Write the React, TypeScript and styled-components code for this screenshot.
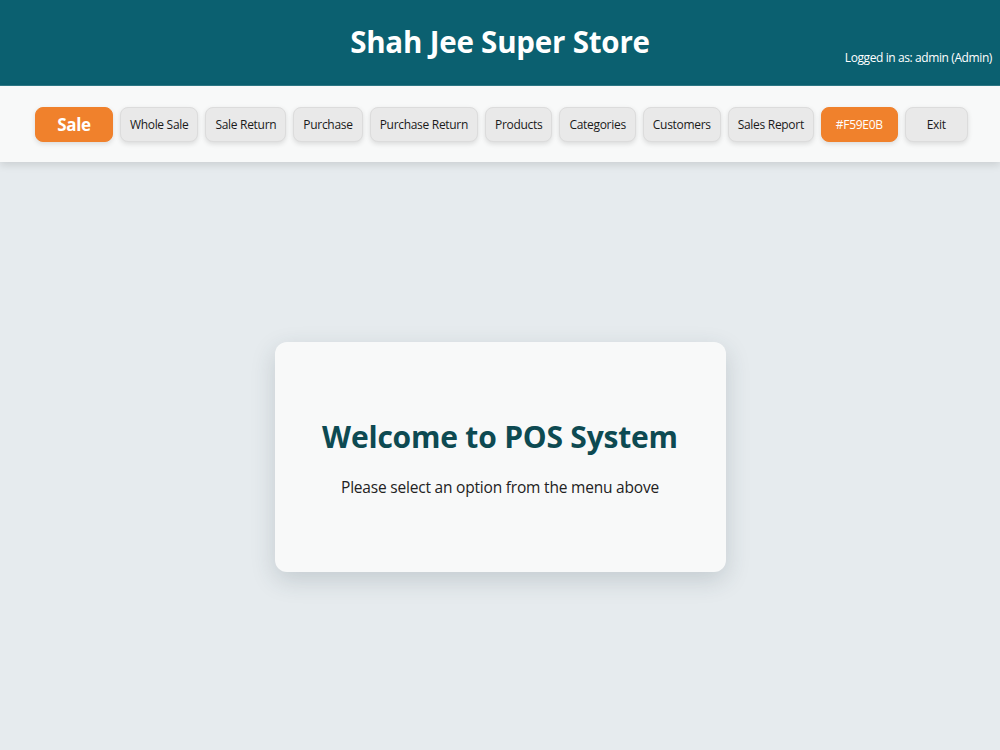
import { memo } from "react";
import styled, { createGlobalStyle } from "styled-components";

const GlobalStyle = createGlobalStyle`
  html, body {
    margin: 0;
    padding: 0;
    height: 100%;
  }
  body {
    background: #e6ebee;
    font-family: "Open Sans", "Noto Sans", "Liberation Sans", sans-serif;
    color: #222;
  }
  #root {
    min-height: 100vh;
    display: flex;
    flex-direction: column;
  }
`;

const menuItems = [
  "Whole Sale",
  "Sale Return",
  "Purchase",
  "Purchase Return",
  "Products",
  "Categories",
  "Customers",
  "Sales Report",
];

const App = memo(() => {
  return (
    <>
      <GlobalStyle />
      <SHeader>
        <span />
        <STitle>Shah Jee Super Store</STitle>
        <SUser>Logged in as: admin (Admin)</SUser>
      </SHeader>
      <SNav>
        <SNavButton variant="main">Sale</SNavButton>
        {menuItems.map((item) => (
          <SNavButton key={item}>{item}</SNavButton>
        ))}
        <SNavButton variant="accent">#F59E0B</SNavButton>
        <SNavButton wide>Exit</SNavButton>
      </SNav>
      <SMain>
        <SCard>
          <SWelcome>Welcome to POS System</SWelcome>
          <SHint>Please select an option from the menu above</SHint>
        </SCard>
      </SMain>
    </>
  );
});

export default App;

const SHeader = styled.header`
  height: 86px;
  box-sizing: border-box;
  background: #0b6070;
  display: grid;
  grid-template-columns: 1fr auto 1fr;
  align-items: center;
  padding: 0 8px;
  border-bottom: 1px solid #2f7a88;
`;

const STitle = styled.h1`
  margin: 0 0 2px;
  color: #fff;
  font-size: 29.5px;
  font-weight: 700;
  letter-spacing: -0.2px;
`;

const SUser = styled.div`
  justify-self: end;
  align-self: end;
  margin-bottom: 19px;
  color: #fff;
  font-size: 12px;
  letter-spacing: -0.4px;
`;

const SNav = styled.nav`
  background: #f8f9f9;
  height: 76px;
  box-sizing: border-box;
  display: flex;
  align-items: center;
  justify-content: center;
  gap: 7px;
  padding-top: 1px;
  padding-left: 3px;
  box-shadow: 0 3px 8px rgba(0, 0, 0, 0.12);
  position: relative;
  z-index: 1;
`;

const SNavButton = styled.button<{ variant?: "main" | "accent"; wide?: boolean }>`
  height: 35px;
  box-sizing: border-box;
  padding: 0 ${(p) => (p.variant === "main" ? "21px" : p.variant === "accent" ? "14px" : p.wide ? "21px" : "9px")};
  border-radius: 8px;
  font-family: inherit;
  font-size: ${(p) => (p.variant === "main" ? "17px" : "12px")};
  font-weight: ${(p) => (p.variant === "main" ? 700 : 500)};
  letter-spacing: -0.3px;
  cursor: pointer;
  color: ${(p) => (p.variant ? "#fff" : "#1a1a1a")};
  background: ${(p) => (p.variant ? "#f0812c" : "#e9e9e9")};
  border: 1px solid ${(p) => (p.variant ? "#f0812c" : "#dcdcdc")};
  box-shadow: 0 2px 5px rgba(0, 0, 0, 0.12);
`;

const SMain = styled.main`
  flex: 1;
  display: flex;
  align-items: center;
  justify-content: center;
`;

const SCard = styled.section`
  width: 451px;
  height: 230px;
  box-sizing: border-box;
  background: #f8f9f9;
  border-radius: 12px;
  box-shadow: 0 8px 24px rgba(40, 60, 70, 0.18);
  display: flex;
  flex-direction: column;
  align-items: center;
  justify-content: center;
  margin-top: 2px;
`;

const SWelcome = styled.h2`
  margin: 0 0 19px;
  color: #0d4a52;
  font-size: 30px;
  font-weight: 700;
  letter-spacing: -0.2px;
`;

const SHint = styled.p`
  margin: 0;
  font-size: 15.5px;
  color: #222;
  letter-spacing: -0.2px;
`;
